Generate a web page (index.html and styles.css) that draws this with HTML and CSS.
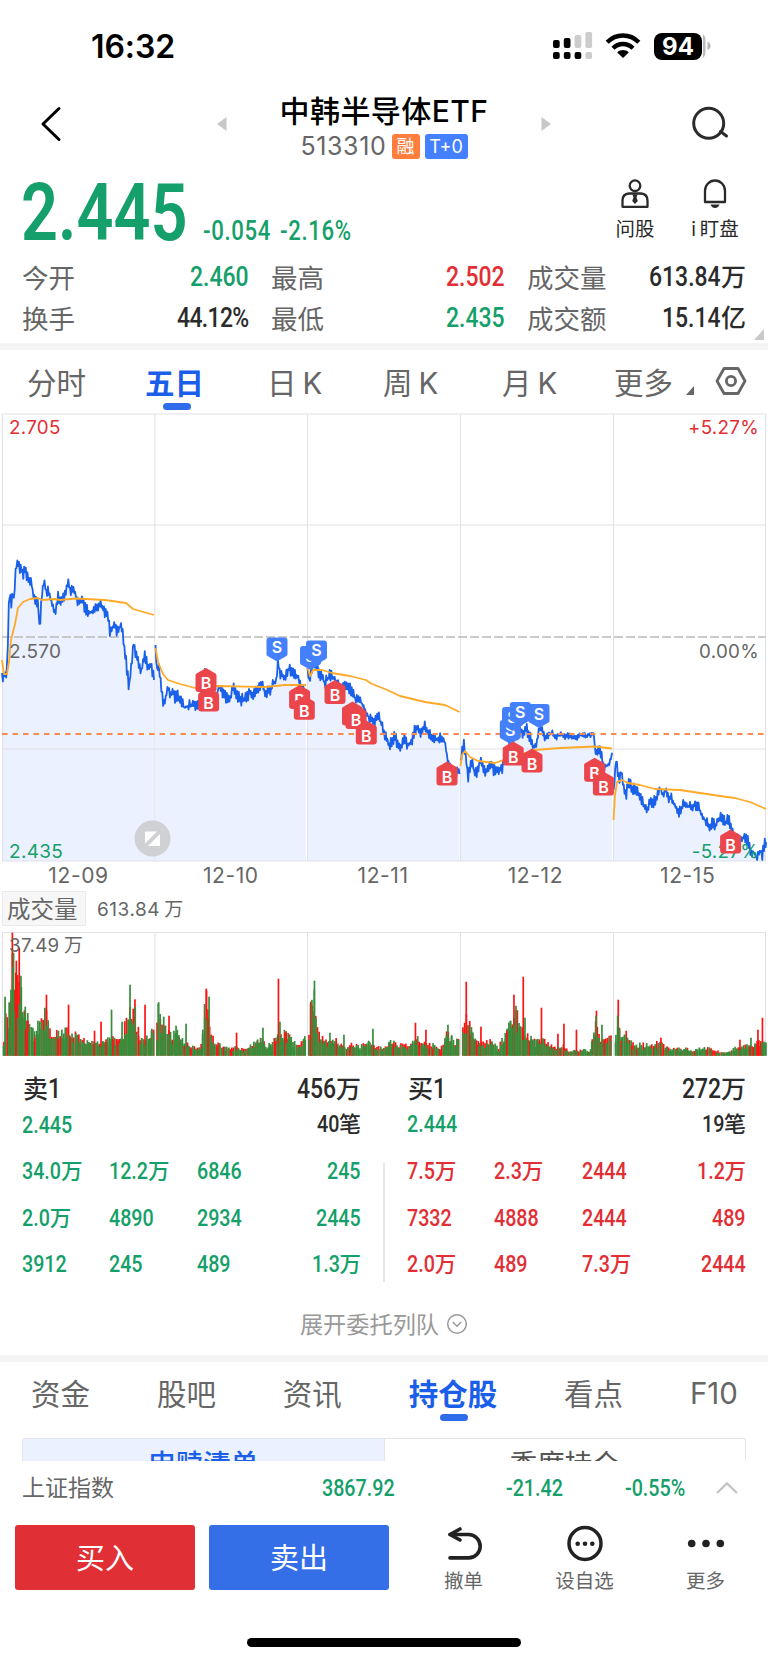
FILE: index.html
```html
<!DOCTYPE html>
<html lang="zh-CN">
<head>
<meta charset="utf-8">
<title>中韩半导体ETF</title>
<link rel="stylesheet" href="styles.css">
</head>
<body>
<div class="screen">
  <div class="status">
    <span class="clock">16:32</span>
    <div class="status-icons">
      <svg width="40" height="28" viewBox="0 0 40 28">
        <g fill="#000"><rect x="0" y="8" width="6.7" height="8" rx="2"/><rect x="10.8" y="6" width="6.7" height="10" rx="2"/><rect x="0" y="20" width="6.7" height="7" rx="2"/><rect x="10.8" y="20" width="6.7" height="7" rx="2"/><rect x="21.6" y="20" width="6.7" height="7" rx="2"/></g>
        <g fill="#ccc"><rect x="21.6" y="3" width="6.7" height="13" rx="2"/><rect x="32.4" y="0" width="6.7" height="16" rx="2"/><rect x="32.4" y="20" width="6.7" height="7" rx="2"/></g>
      </svg>
      <svg class="wifi" width="36" height="28" viewBox="0 0 36 28">
        <g fill="none" stroke="#000" stroke-width="4.4"><path d="M2.2 10.2C11 1.2 25 1.2 33.8 10.2"/><path d="M8 16.2c5.6-5.6 14.400-5.600 20 0"/></g>
        <path d="M18 26l-5.800-5.600c3.200-3.200 8.400-3.200 11.600 0z"/>
      </svg>
      <div class="battery">94</div>
      <svg class="cap" width="8" height="28" viewBox="0 0 8 28"><path d="M0 2c2 2 2.500 4 2.500 6v12c0 2-.5 4-2.500 6z" fill="#bbb"/><path d="M4.500 9.500c4 2 4 7 0 8.500z" fill="#b5b5b5"/></svg>
    </div>
  </div>

  <div class="header">
    <svg class="back" width="22" height="36" viewBox="0 0 22 36"><path d="M19 2.500L3 18l16 15.500" fill="none" stroke="#000" stroke-width="3" stroke-linecap="round" stroke-linejoin="round"/></svg>
    <svg width="10" height="16" viewBox="0 0 10 16"><path d="M9.500 1v14L0 8z" fill="#c8c8c8"/></svg>
    <div class="title">
      <div class="name">中韩半导体ETF</div>
      <div class="code"><span>513310</span><b class="rong">融</b><b class="t0">T+0</b></div>
    </div>
    <svg width="10" height="16" viewBox="0 0 10 16"><path d="M.5 1v14L10 8z" fill="#c8c8c8"/></svg>
    <svg class="search" width="38" height="36" viewBox="0 0 38 36"><g fill="none" stroke="#2b2b2b" stroke-width="3" stroke-linecap="round"><circle cx="17.700" cy="17.300" r="15"/><path d="M29.500 25.500l6 4.500"/></g></svg>
  </div>

  <div class="quote green">
    <span class="din price">2.445</span>
    <span class="din chg">-0.054</span>
    <span class="din pct">-2.16%</span>
    <div class="tool">
      <svg width="30" height="30" viewBox="0 0 30 30"><g fill="none" stroke="#2a2a2a" stroke-width="2.300" stroke-linejoin="round"><circle cx="15" cy="6.700" r="5.300"/><path d="M9 14.500h12q6.500 .500 6.500 7v6.300h-25v-6.300q0-6.500 6.500-7z"/></g><path d="M12.500 15.500h5l-1 3 1.300 3.500-2.800 3-2.800-3 1.300-3.500z" fill="#2a2a2a"/></svg>
      <span>问股</span>
    </div>
    <div class="tool">
      <svg width="30" height="30" viewBox="0 0 30 30"><path d="M5 23V12a10 10.500 0 0 1 20 0v11z" fill="none" stroke="#2a2a2a" stroke-width="2.300" stroke-linejoin="round"/><path d="M10.500 25.500h9q-1.500 3.500-4.500 3.500t-4.500-3.500z" fill="#2a2a2a"/></svg>
      <span>i<s></s>盯盘</span>
    </div>
  </div>

  <div class="stats">
    <span>今开</span><em class="green"><i class="din">2.460</i></em><span>最高</span><em class="red"><i class="din">2.502</i></em><span>成交量</span><em><i class="din">613.84</i>万</em>
    <span>换手</span><em><i class="din tight">44.12%</i></em><span>最低</span><em class="green"><i class="din">2.435</i></em><span>成交额</span><em><i class="din">15.14</i>亿</em>
    <svg class="corner" width="10" height="11" viewBox="0 0 10 11"><path d="M10 0v11H0z" fill="#c9c9c9"/></svg>
  </div>
  <div class="band"></div>

  <div class="tabs periods">
    <span>分时</span><span class="on">五日</span><span>日<s></s>K</span><span>周<s></s>K</span><span>月<s></s>K</span><span>更多</span>
    <svg class="tri" width="8" height="9" viewBox="0 0 8 9"><path d="M8 0v9H0z" fill="#666"/></svg>
    <svg width="32" height="30" viewBox="0 0 32 30"><g fill="none" stroke="#666" stroke-width="2.800" stroke-linejoin="round"><path d="M9 2.500h14l7 12.500-7 12.500H9L2 15z"/><circle cx="16" cy="15" r="4.600"/></g></svg>
  </div>

  <svg class="chart" id="chart" width="768" height="473" viewBox="0 413 768 473"></svg>

  <div class="vol-head"><span class="vol-name">成交量</span><span>613.84<s></s>万</span></div>
  <svg class="chart" id="volume" width="768" height="126" viewBox="0 931 768 126"></svg>

  <div class="book">
    <div class="side">
      <div class="top"><span>卖<i class="din">1</i></span><span><i class="din">456</i>万</span></div>
      <div class="sub"><span class="green low"><i class="din">2.445</i></span><span><i class="din">40</i>笔</span></div>
      <div class="queue green">
        <span><i class="din">34.0</i>万</span><span><i class="din">12.2</i>万</span><span><i class="din">6846</i></span><span><i class="din">245</i></span>
        <span><i class="din">2.0</i>万</span><span><i class="din">4890</i></span><span><i class="din">2934</i></span><span><i class="din">2445</i></span>
        <span><i class="din">3912</i></span><span><i class="din">245</i></span><span><i class="din">489</i></span><span><i class="din">1.3</i>万</span>
      </div>
    </div>
    <div class="divider"></div>
    <div class="side">
      <div class="top"><span>买<i class="din">1</i></span><span><i class="din">272</i>万</span></div>
      <div class="sub"><span class="green"><i class="din">2.444</i></span><span><i class="din">19</i>笔</span></div>
      <div class="queue red">
        <span><i class="din">7.5</i>万</span><span><i class="din">2.3</i>万</span><span><i class="din">2444</i></span><span><i class="din">1.2</i>万</span>
        <span><i class="din">7332</i></span><span><i class="din">4888</i></span><span><i class="din">2444</i></span><span><i class="din">489</i></span>
        <span><i class="din">2.0</i>万</span><span><i class="din">489</i></span><span><i class="din">7.3</i>万</span><span><i class="din">2444</i></span>
      </div>
    </div>
  </div>
  <div class="expand"><span>展开委托列队</span><svg width="22" height="22" viewBox="0 0 22 22"><g fill="none" stroke="#999" stroke-width="1.500"><circle cx="11" cy="11" r="9.300"/><path d="M6.800 9l4.200 4.300L15.200 9"/></g></svg></div>
  <div class="band"></div>

  <div class="tabs sections">
    <span>资金</span><span>股吧</span><span>资讯</span><span class="on">持仓股</span><span>看点</span><span class="f10">F10</span>
  </div>
  <div class="segment"><span class="sel">申赎清单</span><span>季度持仓</span></div>

  <div class="index">
    <span>上证指数</span><i class="din">3867.92</i><i class="din">-21.42</i><i class="din">-0.55%</i>
    <svg width="24" height="14" viewBox="0 0 24 14"><path d="M2 12L12 2.500 22 12" fill="none" stroke="#c4c4c4" stroke-width="2.400"/></svg>
  </div>
  <div class="actions">
    <div class="btn buy">买入</div><div class="btn sell">卖出</div>
    <div class="act"><svg width="40" height="40" viewBox="0 0 40 40"><g fill="none" stroke="#222" stroke-width="3.600" stroke-linecap="round" stroke-linejoin="round"><path d="M6 9.500h18.500a11.700 11.700 0 0 1 0 23.400H6"/><path d="M16 4L6 9.500 16 15"/></g></svg><span>撤单</span></div>
    <div class="act"><svg width="40" height="40" viewBox="0 0 40 40"><circle cx="20" cy="18.500" r="16" fill="none" stroke="#222" stroke-width="3.500"/><g fill="#222"><circle cx="12.700" cy="18.800" r="2.300"/><circle cx="20" cy="18.800" r="2.300"/><circle cx="27.300" cy="18.800" r="2.300"/></g></svg><span>设自选</span></div>
    <div class="act"><svg width="40" height="40" viewBox="0 0 40 40"><g fill="#222"><circle cx="5.700" cy="18.500" r="3.800"/><circle cx="20" cy="18.500" r="3.800"/><circle cx="34.300" cy="18.500" r="3.800"/></g></svg><span>更多</span></div>
  </div>
  <div class="home"></div>
</div>
<script src="chart.js"></script>
</body>
</html>
```
FILE: styles.css
```css
* { box-sizing: border-box; }
body { margin: 0; background: #fff; font-family: Inter, "Noto Sans CJK SC", sans-serif; color: #2b2b2b; }
.screen { width: 768px; height: 1662px; overflow: hidden; display: flex; flex-direction: column; }
.screen > * { flex: none; }
svg { display: block; flex: none; }
i, em { font-style: normal; }
s { display: inline-block; width: 4px; }
.din { display: inline-block; font-family: Roboto, sans-serif; font-weight: 500; transform: scaleX(.82); transform-origin: left center; white-space: nowrap; }
.green { color: #159f6a; }
.red { color: #e22e35; }

.status { height: 92px; display: flex; justify-content: space-between; align-items: center; padding: 0 57px 0 91px; }
.clock { font-size: 32px; font-weight: 600; color: #000; letter-spacing: -.1px; }
.status-icons { display: flex; align-items: center; height: 28px; }
.wifi { margin-left: 12px; }
.battery { margin-left: 13px; width: 48px; height: 27px; border-radius: 8px; background: #000; color: #fff; font-size: 24px; font-weight: 700; line-height: 27px; text-align: center; }
.cap { margin-left: 1px; }

.header { height: 72px; display: flex; align-items: flex-start; padding: 0 36px 0 40px; }
.header > svg { margin-top: 24px; }
.header .back, .header .search { margin-top: 14px; }
.back + svg { margin-left: 155px; }
.title { width: 314px; display: flex; flex-direction: column; align-items: center; }
.name { margin-top: 1px; height: 37px; line-height: 36px; font-size: 30px; font-weight: 500; color: #000; white-space: nowrap; letter-spacing: .45px; }
.code { display: flex; align-items: center; height: 28px; margin-top: 2px; font-size: 25px; color: #666; font-weight: 400; }
.code span { width: 84px; letter-spacing: .6px; white-space: nowrap; }
.code b { height: 25px; line-height: 25px; border-radius: 3px; color: #fff; font-weight: 400; font-size: 18px; text-align: center; }
.rong { width: 28px; margin-left: 7px; background: #ff7e3e; }
.t0 { width: 43px; margin-left: 5px; background: #4480ff; }
.search { margin-left: 140px; }

.quote { height: 90px; display: flex; align-items: flex-start; padding-left: 21px; }
.price { font-size: 79px; line-height: 78px; margin-top: 10px; font-weight: 600; }
.chg, .pct { font-size: 27px; line-height: 30px; margin-top: 52px; letter-spacing: .8px; }
.chg { margin-left: 16px; }
.pct { margin-left: 9px; }
.tool { display: flex; flex-direction: column; align-items: center; color: #2a2a2a; font-size: 19.500px; line-height: 24px; width: 80px; padding-top: 15px; }
.tool span { margin-top: 8px; white-space: nowrap; }
.pct + .tool { margin-left: auto; }
.tool:last-child { margin-right: 13px; }

.stats { height: 89px; padding: 2px 22px 0 23px; display: grid; grid-template-columns: 52px 174px 23px 52px 181px 23px 80px 1fr; grid-template-rows: 41px 41px; align-items: center; font-size: 26.500px; position: relative; }
.stats > span { color: #666; white-space: nowrap; margin-left: -1px; }
.stats > span:nth-of-type(3n+1) { grid-column: 1; }
.stats > span:nth-of-type(3n+2) { grid-column: 4; }
.stats > span:nth-of-type(3n) { grid-column: 7; }
.stats em { display: flex; justify-content: flex-end; align-items: center; font-weight: 500; font-size: 25px; line-height: 34px; white-space: nowrap; }
.stats .din { font-size: 28px; }
.stats .tight { letter-spacing: -.8px; }
.corner { position: absolute; right: 4px; bottom: 3px; }
.band { height: 7px; background: #f4f4f4; }

.tabs { display: flex; align-items: center; color: #666; font-size: 29.500px; white-space: nowrap; }
.tabs > span { position: relative; }
.tabs .on { color: #1a5eea; font-weight: 700; }
.tabs .on::after { content: ""; position: absolute; left: 50%; margin-left: -12px; bottom: -8px; width: 28px; height: 7px; border-radius: 4px; background: #2f6cea; }
.periods { height: 63px; padding: 0 0 2px 27px; display: grid; justify-items: start; grid-template-columns: 118px 122px 116px 119px 112px 72px 29px 32px; }
.periods .tri { margin-top: 20px; }
.periods s { width: 6px; }

.chart text { font-family: Inter, "Noto Sans CJK SC", sans-serif; }
.vol-head { height: 45px; display: flex; align-items: flex-start; padding: 5px 2px; font-size: 19px; line-height: 37px; color: #666; letter-spacing: .55px; }
.vol-name { width: 84px; height: 35px; border: 1px solid #eaeaea; background: #f7f7f7; font-size: 23.500px; line-height: 35px; text-align: left; padding-left: 4px; margin-right: 11px; letter-spacing: 0; }

.book { height: 245px; display: flex; padding: 14px 22px 0; font-weight: 500; }
.side { width: 339px; }
.divider { width: 2px; height: 119px; margin: 92px 22px 0 22px; background: #e8e8e8; }
.side span { display: flex; align-items: center; white-space: nowrap; line-height: 30px; }
.top, .sub { display: flex; justify-content: space-between; }
.top { height: 34px; font-size: 25px; padding: 1px 0 0 1px; }
.top .din { font-size: 28px; }
.sub { height: 36px; font-size: 22px; padding-top: 1px; }
.sub .din { font-size: 24px; }
.sub .low { padding-top: 2px; }
.queue { margin-top: 7px; display: grid; grid-template-columns: 87px 88px 87px 1fr; grid-auto-rows: 46.500px; font-size: 21.500px; }
.queue .din { font-size: 24px; }
.queue span:nth-child(4n) { justify-content: flex-end; }
.expand { height: 53px; display: flex; justify-content: center; align-items: center; gap: 7px; color: #999; font-size: 23.200px; padding-bottom: 9px; }
.expand span { margin-top: -2px; }

.sections { height: 75px; padding: 0 30px 15px 31px; justify-content: space-between; }
.sections .on::after { bottom: -8px; margin-left: -13px; }
.sections .f10 { margin-top: 2px; }
.segment { height: 23px; margin: 1px 22px 0; border: 1px solid #e3e5ea; border-bottom: 0; border-radius: 3px 3px 0 0; overflow: hidden; display: flex; font-size: 27.500px; line-height: 50px; color: #555; text-align: center; }
.segment span { flex: 1; height: 50px; }
.segment .sel { background: #ebf1fe; color: #1a5eea; font-weight: 500; border-right: 1px solid #dfe3ec; }
.index { height: 53px; display: grid; grid-template-columns: 300px 184px 119px 90px 24px; align-items: center; padding-left: 22px; font-size: 23px; color: #666; }
.index span { margin-top: -3px; }
.index .din { color: #159f6a; font-size: 24px; justify-self: start; }

.actions { display: flex; padding: 11px 0 0 15px; height: 87px; }
.btn { flex: none; width: 180px; height: 65px; line-height: 67px; margin-right: 14px; border-radius: 3px; color: #fff; font-size: 29px; text-align: center; }
.buy { background: #e03036; }
.sell { background: #346fe8; }
.act { flex: none; width: 121px; display: flex; flex-direction: column; align-items: center; font-size: 19.500px; line-height: 24px; color: #666; }
.act span { margin-top: 4px; white-space: nowrap; }
.home { margin: 37px 0 0 247px; width: 274px; height: 9px; border-radius: 5px; background: #000; }
```
FILE: chart.js
```js
// Condensed numerals: collapse the layout width to the scaled width.
document.querySelectorAll('.din').forEach(function (el) {
  el.style.marginRight = (-0.18 * el.offsetWidth) + 'px';
});

var seed = 7;
function rnd() { seed = (seed * 16807) % 2147483647; return seed / 2147483647; }
function parse(s) { return s.trim().split(/\s+/).map(function (p) { return p.split(',').map(Number); }); }
function at(points, x) {
  for (var i = 1; i < points.length; i++) {
    if (x <= points[i][0]) {
      var a = points[i - 1], b = points[i];
      return a[1] + (b[1] - a[1]) * (x - a[0]) / (b[0] - a[0]);
    }
  }
  return points[points.length - 1][1];
}
function path(points) { return 'M' + points.map(function (p) { return p[0].toFixed(1) + ' ' + p[1].toFixed(1); }).join('L'); }

var price = [
  '2,673 3,683 5,672 6,676 7.5,660 9,600 10,590 11,606 13,592 14,600 16,566 17.5,560 20,568 23,574 25,568 28,580 31,580 33,594 35,598 38,605 39.7,630 41.5,598 44,577 46,592 49,592 51,600 53,607 55,614 58,594 60,602 63,598 66,590 68,580 70,590 74,592 78,600 82,600 85,608 90,614 94,608 100,604 104,612 108,618 110,633 114,625 117,632 120,626 123,634 126,660 129,688 131,670 133.5,642 135.5,652 139,664 141.5,672 144,655 148,666 151,664 154,680',
  '155.5,645 157,670 159,665 161,685 163.5,704 166,695 168,688 170,696 172,690 175,698 178,694 181,700 184,708 188,706 192,705 196,704 199,706 202,690 206,668 208,690 212,695 216,700 219,685 222,692 226,697 230,700 233,686 237,696 241,700 246,698 250,692 254,694 258,688 262,682 265,693 270,690 273,685 276,680 278,664 281,675 285,676 289,668 293,673 297,676 300,684 303,690 306,692',
  '307.5,668 309,684 312,668 316,664 318,672 321,676 325,683 330,675 335,680 340,685 345,686 350,688 355,698 360,700 364,708 368,716 372,722 377,720 379,716 382,726 386,738 389,745 392,742 395,735 398,746 401,750 404,738 407,744 411,744 414,732 417,726 420,733 423,730 425,725 428,734 433,738 437,740 441,738 445,742 447,758 450,765 455,784 457,770 459.5,774',
  '460.5,760 464,742 466,760 468,778 470,768 472,764 475,774 478,770 480,760 483,768 487,772 490,764 494,770 498,771 502,770 505,758 510,740 514,735 518,737 520,728 523,735 526,727 530,738 534,747 537,740 540,727 544,736 548,736 552,733 556,738 560,734 565,737 570,735 575,738 580,735 585,736 590,735 594,733 595,752 597,756 599,749 602,757 604,768 608,765 612,755',
  '613.5,790 616,760 619,780 621,770 624,790 626,795 629,780 632,788 636,790 639,796 643,802 646,810 650,804 654,802 657,795 660,786 663,796 666,790 668,798 671,796 675,807 680,812 683,804 688,806 693,805 698,807 702,816 706,822 709,828 712,822 715,826 718,820 721,817 725,822 729,820 732,830 738,838 743,838 748,840 751,856 754,852 757,859 760,850 762,857 764,846 766,842'
].map(parse);
var average = [
  '2,660 4,674 7,674 9,662 11,640 15,624 18,608 23,602 30,599 38,598 42,600 55,599 60,600 76,598.5 105,600 126,603 133,609 154,615',
  '155.5,648 158,662 163,674 168,680 180,684 195,688 210,687 218,686 265,687 285,685 306,685',
  '307.5,668 310,676 313,670 322,670 332,673 350,676 366,680 372,684 385,689 400,696 425,702 445,705 459.5,712',
  '460.5,766 462,755 465,751 470,757 478,761 495,763 515,756 535,750 560,748 595,746.5 612,748.5',
  '613.5,820 615,795 617,782 622,780 628,783 640,785 655,789 680,790 700,793 720,796 735,798 750,802 766,809'
].map(parse);

var fills = '', lines = '';
price.forEach(function (day) {
  var pts = [], x0 = day[0][0], x1 = day[day.length - 1][0], flip = 1;
  for (var x = x0; x < x1; x += 0.85) {
    flip = -flip;
    var flat = x > 545 && x < 593;
    pts.push([x, Math.min(860, at(day, x) + (x === x0 ? 0 : flip * rnd() * (flat ? 3 : 6)))]);
  }
  pts.push(day[day.length - 1]);
  fills += '<path d="' + path(pts) + 'L' + x1 + ' 861L' + x0 + ' 861Z" fill="#ebf1fe"/>';
  lines += '<path d="' + path(pts) + '" fill="none" stroke="#1b60e8" stroke-width="1.8" stroke-linejoin="round"/>';
});
average.forEach(function (day) {
  lines += '<path d="' + path(day) + '" fill="none" stroke="#ffa928" stroke-width="1.8" stroke-linejoin="round"/>';
});

function grid(ys, top, bottom) {
  var d = '';
  [2.5, 154.8, 307.5, 460.5, 613.5, 765.5].forEach(function (x) { d += 'M' + x + ' ' + top + 'V' + bottom; });
  ys.forEach(function (y) { d += 'M2 ' + y + 'H766'; });
  return '<path d="' + d + '" stroke="#e1e2e6" stroke-width="1.1" fill="none"/>';
}
function label(x, y, text, color, anchor, size, spacing) {
  return '<text x="' + x + '" y="' + y + '" fill="' + color + '" text-anchor="' + (anchor || 'start') + '" font-size="' + (size || 18.8) + '" letter-spacing="' + (spacing === undefined ? 0.3 : spacing) + '">' + text + '</text>';
}
function marker(kind, x, y) {
  var buy = kind === 'B';
  var d = buy
    ? 'M' + x + ' ' + y + 'l9.500 5.500q1 .6 1 2V' + (y + 21) + 'q0 3-3 3h-15q-3 0-3-3V' + (y + 7.5) + 'q0-1.400 1-2z'
    : 'M' + x + ' ' + (y + 24) + 'l-9.500-5.500q-1-.6-1-2V' + (y + 3) + 'q0-3 3-3h15q3 0 3 3v13.500q0 1.400-1 2z';
  return '<path d="' + d + '" fill="' + (buy ? '#ea464b' : '#4480fb') + '"/>' +
    '<text x="' + x + '" y="' + (y + (buy ? 21 : 15.5)) + '" fill="#fff" font-size="16" font-weight="600" text-anchor="middle">' + kind + '</text>';
}

var out = fills + grid([414, 525, 749, 861], 414, 861);
out += '<path d="M2 637H766" stroke="#b9b9b9" stroke-width="1.3" stroke-dasharray="9 3"/>';
out += lines;
out += '<path d="M2 734H766" stroke="#fa8b50" stroke-width="1.8" stroke-dasharray="5.500 5"/>';
out += label(9, 434, '2.705', '#e22e35') + label(759, 434, '+5.27%', '#e22e35', 'end');
out += label(9, 658, '2.570', '#666', 'start', 19) + label(759, 658, '0.00%', '#666', 'end');
out += label(9, 858, '2.435', '#159f6a', 'start', 19) + label(759, 858, '-5.27%', '#159f6a', 'end');
['12-09', '12-10', '12-11', '12-12', '12-15'].forEach(function (t, i) { out += label(78.5 + i * 152.3, 883, t, '#666', 'middle', 21, 0.6); });
out += '<circle cx="152.500" cy="838.500" r="18" fill="#c9c9c9" fill-opacity=".8"/><path d="M145 831.500h12l-12 12zM160 834v12h-12z" fill="#fff"/>';
[['B', 206, 668], ['B', 208.6, 687.5], ['S', 277, 637.5], ['B', 299.6, 685], ['B', 304.3, 695.7], ['S', 310.5, 646], ['S', 316.5, 640.6],
 ['B', 335, 680], ['B', 352.5, 701.5], ['B', 356, 705], ['B', 366.3, 720.5], ['B', 447, 761.5],
 ['S', 510.3, 720], ['S', 512.5, 707], ['S', 520.3, 702], ['S', 539, 704], ['B', 513.2, 741.5], ['B', 532, 748.5],
 ['B', 594.6, 757.8], ['B', 603.4, 771.5], ['B', 730.6, 829.5]].forEach(function (m) { out += marker(m[0], m[1], m[2]); });
document.getElementById('chart').innerHTML = out;

var envelope = [
  '4,15 5,50 8,35 10,70 12,100 14,80 16,85 18,70 20,80 22,60 25,45 28,38 32,25 40,34 42,42 46,45 50,28 55,24 60,22 70,28 78,20 90,16 100,14 107,17 115,18 123,18 126,40 130,45 135,50 137,28 142,20 148,17 151,30 154,25',
  '157,30 158,59 162,38 166,30 170,22 176,24 182,18 190,12 197,8 202,12 206,64 208,58 211,20 216,14 225,9 235,9 245,6 253,14 262,20 266,8 272,14 277,22 282,24 286,26 291,18 297,11 303,20 306,24',
  '309,20 311,54 314,70 316,37 320,24 325,15 335,18 345,8 352,12 360,10 368,16 375,10 382,9 390,15 398,12 410,10 415,20 425,12 433,12 440,6 448,25 455,15 459,22',
  '463,25 465,44 470,36 475,20 482,12 490,16 498,8 505,22 512,38 516,50 520,28 528,20 535,16 542,22 548,14 556,8 562,12 568,5 575,6 585,7 590,3 596,45 598,20 605,17 612,20',
  '616,20 618,45 621,28 626,24 632,12 640,12 650,11 660,14 668,8 680,8 695,6 705,9 712,7 725,3 735,8 742,10 750,12 758,14 766,18'
].map(parse);
var spikes = '5,59,g 12.3,123,r 13.5,103,g 16.3,95,r 19.3,108,r 21,80,g 25.3,49,g 46.5,61,r 68.5,51,r 94.5,25,r 101,34,r 111.5,46,g 122,34,g 130,71,g 145,51,r 169,40,r 176,30,g 186,32,g 206.500,65,r 209,59,g 236.500,23,r 263,28,g 278.500,77,r 280,34,g 310.800,54,r 314.500,75,g 330,23,g 344,21,g 373,27,g 415.500,33,r 426,26,r 448,31,g 466.300,74,r 481,29,r 514,61,r 516,50,g 523.300,79,r 525,38,g 541.500,48,r 558,22,r 564,32,r 576.500,26,r 596.500,45,r 602,31,g 618.300,56,r 661,18,r 740,16,r 751,18,g 758,26,r 762.500,38,r';
function bar(x, h, red) {
  return '<rect x="' + (x - 0.85).toFixed(1) + '" y="' + (1055.7 - h).toFixed(1) + '" width="1.7" height="' + h.toFixed(1) + '" fill="' + (red ? '#fb1414' : '#378d3b') + '"/>';
}
var vol = grid([932.5], 932.5, 1055.5), back = '', front = '';
envelope.forEach(function (day) {
  for (var x = day[0][0]; x <= day[day.length - 1][0]; x += 1.7) {
    var h = at(day, x);
    back += bar(x, h * (0.65 + rnd() * 0.5), rnd() < 0.65);
    front += bar(x + (rnd() - 0.5), h * (0.5 + rnd() * 0.5), rnd() < 0.12);
  }
});
vol += back;
spikes.split(' ').forEach(function (s) { var p = s.split(','); vol += bar(+p[0], +p[1], p[2] === 'r'); });
vol += front + label(9, 952, '37.49', '#666') + label(64, 952, '万', '#666');
document.getElementById('volume').innerHTML = vol;
```
